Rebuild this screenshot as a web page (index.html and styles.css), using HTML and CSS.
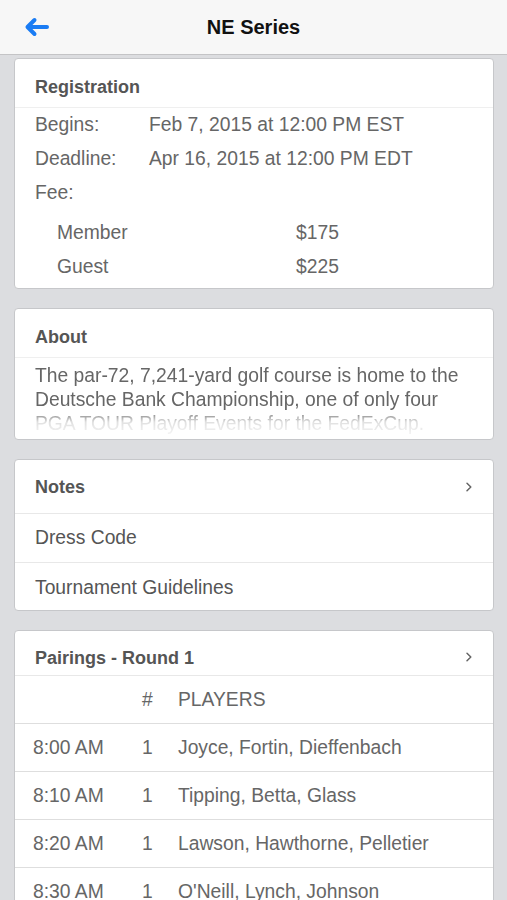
FILE: index.html
```html
<!DOCTYPE html>
<html>
<head>
<meta charset="utf-8">
<link rel="stylesheet" href="styles.css">
</head>
<body>
<header class="nav">
  <svg class="back" width="26" height="20" viewBox="0 0 26 20"><path d="M10.5 3 L3.5 10 L10.5 17 M4 10 H23" fill="none" stroke="#1a7cf4" stroke-width="4" stroke-linecap="round" stroke-linejoin="round"/></svg>
  <h1 class="title">NE Series</h1>
</header>
<main class="content">
  <section class="card">
    <div class="card-head reg-head">Registration</div>
    <div class="reg-body">
      <div class="kv"><span class="k">Begins:</span><span class="v">Feb 7, 2015 at 12:00 PM EST</span></div>
      <div class="kv"><span class="k">Deadline:</span><span class="v">Apr 16, 2015 at 12:00 PM EDT</span></div>
      <div class="kv"><span class="k">Fee:</span></div>
      <div class="fees">
        <div class="fee"><span class="fk">Member</span><span class="fv">$175</span></div>
        <div class="fee"><span class="fk">Guest</span><span class="fv">$225</span></div>
      </div>
    </div>
  </section>
  <section class="card">
    <div class="card-head reg-head">About</div>
    <div class="about">
      <p class="about-text">The par-72, 7,241-yard golf course is home to the Deutsche Bank Championship, one of only four PGA TOUR Playoff Events for the FedExCup.</p>
    </div>
  </section>
  <section class="card">
    <div class="card-head notes-head"><span>Notes</span><svg class="chev" width="8" height="10" viewBox="0 0 8 10"><path d="M2 1.2 L5.8 5 L2 8.8" fill="none" stroke="#666" stroke-width="1.5" stroke-linecap="round" stroke-linejoin="round"/></svg></div>
    <div class="item">Dress Code</div>
    <div class="item last">Tournament Guidelines</div>
  </section>
  <section class="card">
    <div class="card-head pair-head"><span>Pairings - Round 1</span><svg class="chev" width="8" height="10" viewBox="0 0 8 10"><path d="M2 1.2 L5.8 5 L2 8.8" fill="none" stroke="#666" stroke-width="1.5" stroke-linecap="round" stroke-linejoin="round"/></svg></div>
    <div class="prow phead"><span class="t"></span><span class="n">#</span><span class="p">PLAYERS</span></div>
    <div class="prow"><span class="t">8:00 AM</span><span class="n">1</span><span class="p">Joyce, Fortin, Dieffenbach</span></div>
    <div class="prow"><span class="t">8:10 AM</span><span class="n">1</span><span class="p">Tipping, Betta, Glass</span></div>
    <div class="prow"><span class="t">8:20 AM</span><span class="n">1</span><span class="p">Lawson, Hawthorne, Pelletier</span></div>
    <div class="prow"><span class="t">8:30 AM</span><span class="n">1</span><span class="p">O'Neill, Lynch, Johnson</span></div>
  </section>
</main>
</body>
</html>
```
FILE: styles.css
```css
* { box-sizing: border-box; }
html, body { margin: 0; padding: 0; }
body {
  background: #dcdde0;
  font-family: "Liberation Sans", Arial, sans-serif;
  color: #666;
  width: 507px;
  height: 900px;
  overflow: hidden;
}
.nav {
  height: 55px;
  background: #f7f7f7;
  border-bottom: 1px solid #c4c4c6;
  display: flex;
  align-items: center;
  justify-content: center;
  position: relative;
}
.back {
  position: absolute;
  left: 24px;
  top: 17px;
}
.title {
  margin: 0;
  font-size: 20px;
  font-weight: bold;
  color: #111;
  padding-top: 1px;
}
.content {
  display: flex;
  flex-direction: column;
  gap: 19px;
  padding: 3px 13px 0 14px;
}
.card {
  background: #fff;
  border: 1px solid #c6c7ca;
  border-radius: 4px;
  overflow: hidden;
}
.card-head {
  font-size: 18px;
  font-weight: bold;
  color: #555;
  padding-left: 20px;
  padding-right: 20px;
  border-bottom: 1px solid #efefef;
  display: flex;
  justify-content: space-between;
  align-items: center;
}
.reg-head { height: 49px; padding-top: 8px; }
.notes-head { height: 54px; padding-top: 2px; border-bottom-color: #e8e8e8; }
.pair-head { height: 45px; padding-top: 10px; border-bottom-color: #e8e8e8; }
.chev {
  position: relative;
  top: -1px;
}
.reg-body {
  padding: 0 0 4px 20px;
  font-size: 19.3px;
}
.kv { height: 34px; display: flex; align-items: center; }
.k { width: 114px; }
.fees { padding-top: 6px; padding-left: 22px; }
.fee { height: 34px; display: flex; align-items: center; }
.fk { width: 239px; }
.about {
  padding: 6px 20px 0 20px;
  height: 81px;
  overflow: hidden;
}
.about-text {
  margin: 0;
  font-size: 19.3px;
  line-height: 24px;
  -webkit-mask-image: linear-gradient(to bottom, #000 0, #000 46px, rgba(0,0,0,0.2) 58px, rgba(0,0,0,0.04) 74px);
  mask-image: linear-gradient(to bottom, #000 0, #000 46px, rgba(0,0,0,0.2) 58px, rgba(0,0,0,0.04) 74px);
}
.item {
  height: 49px;
  font-size: 19.3px;
  color: #555;
  padding-left: 20px;
  display: flex;
  align-items: center;
  border-bottom: 1px solid #e8e8e8;
}
.item.last { border-bottom: none; height: 47px; padding-top: 2px; }
.prow {
  height: 48px;
  display: flex;
  align-items: center;
  font-size: 19.3px;
  color: #666;
  padding-left: 18px;
  border-bottom: 1px solid #dedede;
}
.t { width: 109px; }
.n { width: 36px; }
```
